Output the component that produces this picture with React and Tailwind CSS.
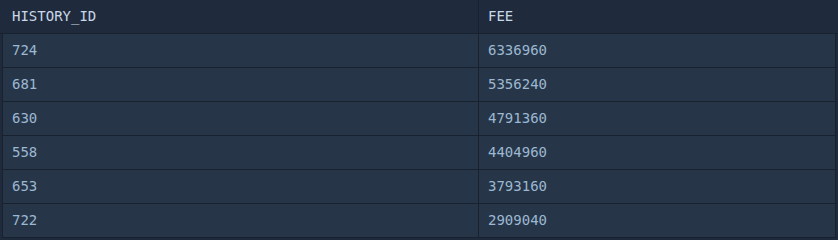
export default function App() {
  const rows = [
    ["724", "6336960"],
    ["681", "5356240"],
    ["630", "4791360"],
    ["558", "4404960"],
    ["653", "3793160"],
    ["722", "2909040"],
  ];
  return (
    <div className="w-[838px] h-[240px] bg-[#1f2b3d] overflow-hidden" style={{ fontFamily: '"DejaVu Sans Mono", monospace' }}>
      <div className="grid grid-cols-[479px_1fr] h-[34px] border-b border-[#18222f] text-[14px] text-[#c9d7e6]">
        <div className="pl-[12px] flex items-center border-r border-[#18222f]">HISTORY_ID</div>
        <div className="pl-[9px] flex items-center">FEE</div>
      </div>
      {rows.map((r, i) => (
        <div key={i} className="grid grid-cols-[476px_1fr] h-[34px] ml-[2px] mr-[2px] border-x border-b border-[#18222f] bg-[#263648] text-[14px] text-[#9db8d2]">
          <div className="pl-[9px] flex items-center border-r border-[#18222f]">{r[0]}</div>
          <div className="pl-[9px] flex items-center">{r[1]}</div>
        </div>
      ))}
    </div>
  );
}
